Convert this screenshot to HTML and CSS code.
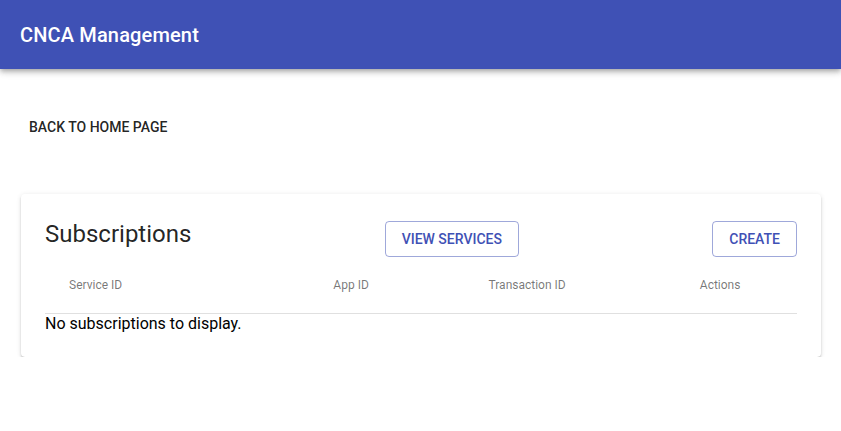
FILE: index.html
```html
<!DOCTYPE html>
<html lang="en">
<head>
<meta charset="utf-8">
<title>CNCA Management</title>
<link rel="stylesheet" href="styles.css">
</head>
<body>
<header class="appbar">
  <h1 class="appbar-title">CNCA Management</h1>
</header>
<main class="page">
  <div class="back-row">
    <button class="btn btn-text">Back to Home Page</button>
  </div>
  <section class="card">
    <div class="card-head">
      <h2 class="card-title">Subscriptions</h2>
      <button class="btn btn-outlined">View Services</button>
      <button class="btn btn-outlined">Create</button>
    </div>
    <table class="table">
      <colgroup>
        <col class="col-service">
        <col class="col-app">
        <col class="col-tx">
        <col class="col-actions">
      </colgroup>
      <thead>
        <tr>
          <th>Service ID</th>
          <th>App ID</th>
          <th>Transaction ID</th>
          <th>Actions</th>
        </tr>
      </thead>
    </table>
    <p class="empty">No subscriptions to display.</p>
  </section>
</main>
</body>
</html>
```
FILE: styles.css
```css
* { box-sizing: border-box; }
html, body {
  margin: 0;
  padding: 0;
  background: #fff;
  font-family: Roboto, "Liberation Sans", Arial, sans-serif;
  color: rgba(0, 0, 0, 0.87);
}
.appbar {
  height: 69px;
  background: #3f51b5;
  display: flex;
  align-items: center;
  padding: 0 20px;
  box-shadow: 0px 2px 4px -1px rgba(0,0,0,0.2), 0px 4px 5px 0px rgba(0,0,0,0.14), 0px 1px 10px 0px rgba(0,0,0,0.12);
  position: relative;
  z-index: 1;
}
.appbar-title {
  margin: 0;
  color: #fff;
  font-size: 20px;
  font-weight: 500;
  line-height: 32px;
  letter-spacing: 0.0075em;
}
.page {
  padding: 40px 20px 0 21px;
}
.back-row {
  display: flex;
  height: 36px;
}
.btn {
  font-family: Roboto, "Liberation Sans", Arial, sans-serif;
  font-size: 14px;
  font-weight: 500;
  text-transform: uppercase;
  letter-spacing: 0;
  line-height: 1.75;
  border-radius: 4px;
  background: transparent;
  cursor: pointer;
  height: 36px;
}
.btn-text {
  border: 0;
  padding: 6px 8px;
  color: rgba(0, 0, 0, 0.87);
}
.btn-outlined {
  border: 1px solid rgba(63, 81, 181, 0.5);
  padding: 5px 16px;
  color: #3f51b5;
}
.card {
  margin-top: 49px;
  background: #fff;
  border-radius: 4px;
  padding: 24px;
  box-shadow: 0px 3px 1px -2px rgba(0,0,0,0.25), 0px 2px 2px 0px rgba(0,0,0,0.16), 0px 1px 5px 0px rgba(0,0,0,0.12);
}
.card-head {
  display: flex;
  justify-content: space-between;
  align-items: flex-end;
  height: 39px;
}
.card-title {
  margin: 0;
  align-self: flex-start;
  font-size: 24px;
  font-weight: 400;
  line-height: 32px;
}
.table {
  width: 100%;
  border-collapse: collapse;
  table-layout: fixed;
}
.col-service { width: 264px; }
.col-app { width: 155px; }
.col-tx { width: 211px; }
.col-actions { width: 121px; }
.table th {
  height: 56px;
  padding: 0 0 0 24px;
  text-align: left;
  font-size: 12px;
  font-weight: 400;
  color: rgba(0, 0, 0, 0.54);
  border-bottom: 1px solid #e0e0e0;
  vertical-align: middle;
}
.empty {
  margin: 0;
  font-size: 16px;
  line-height: normal;
  color: #000;
}
```
